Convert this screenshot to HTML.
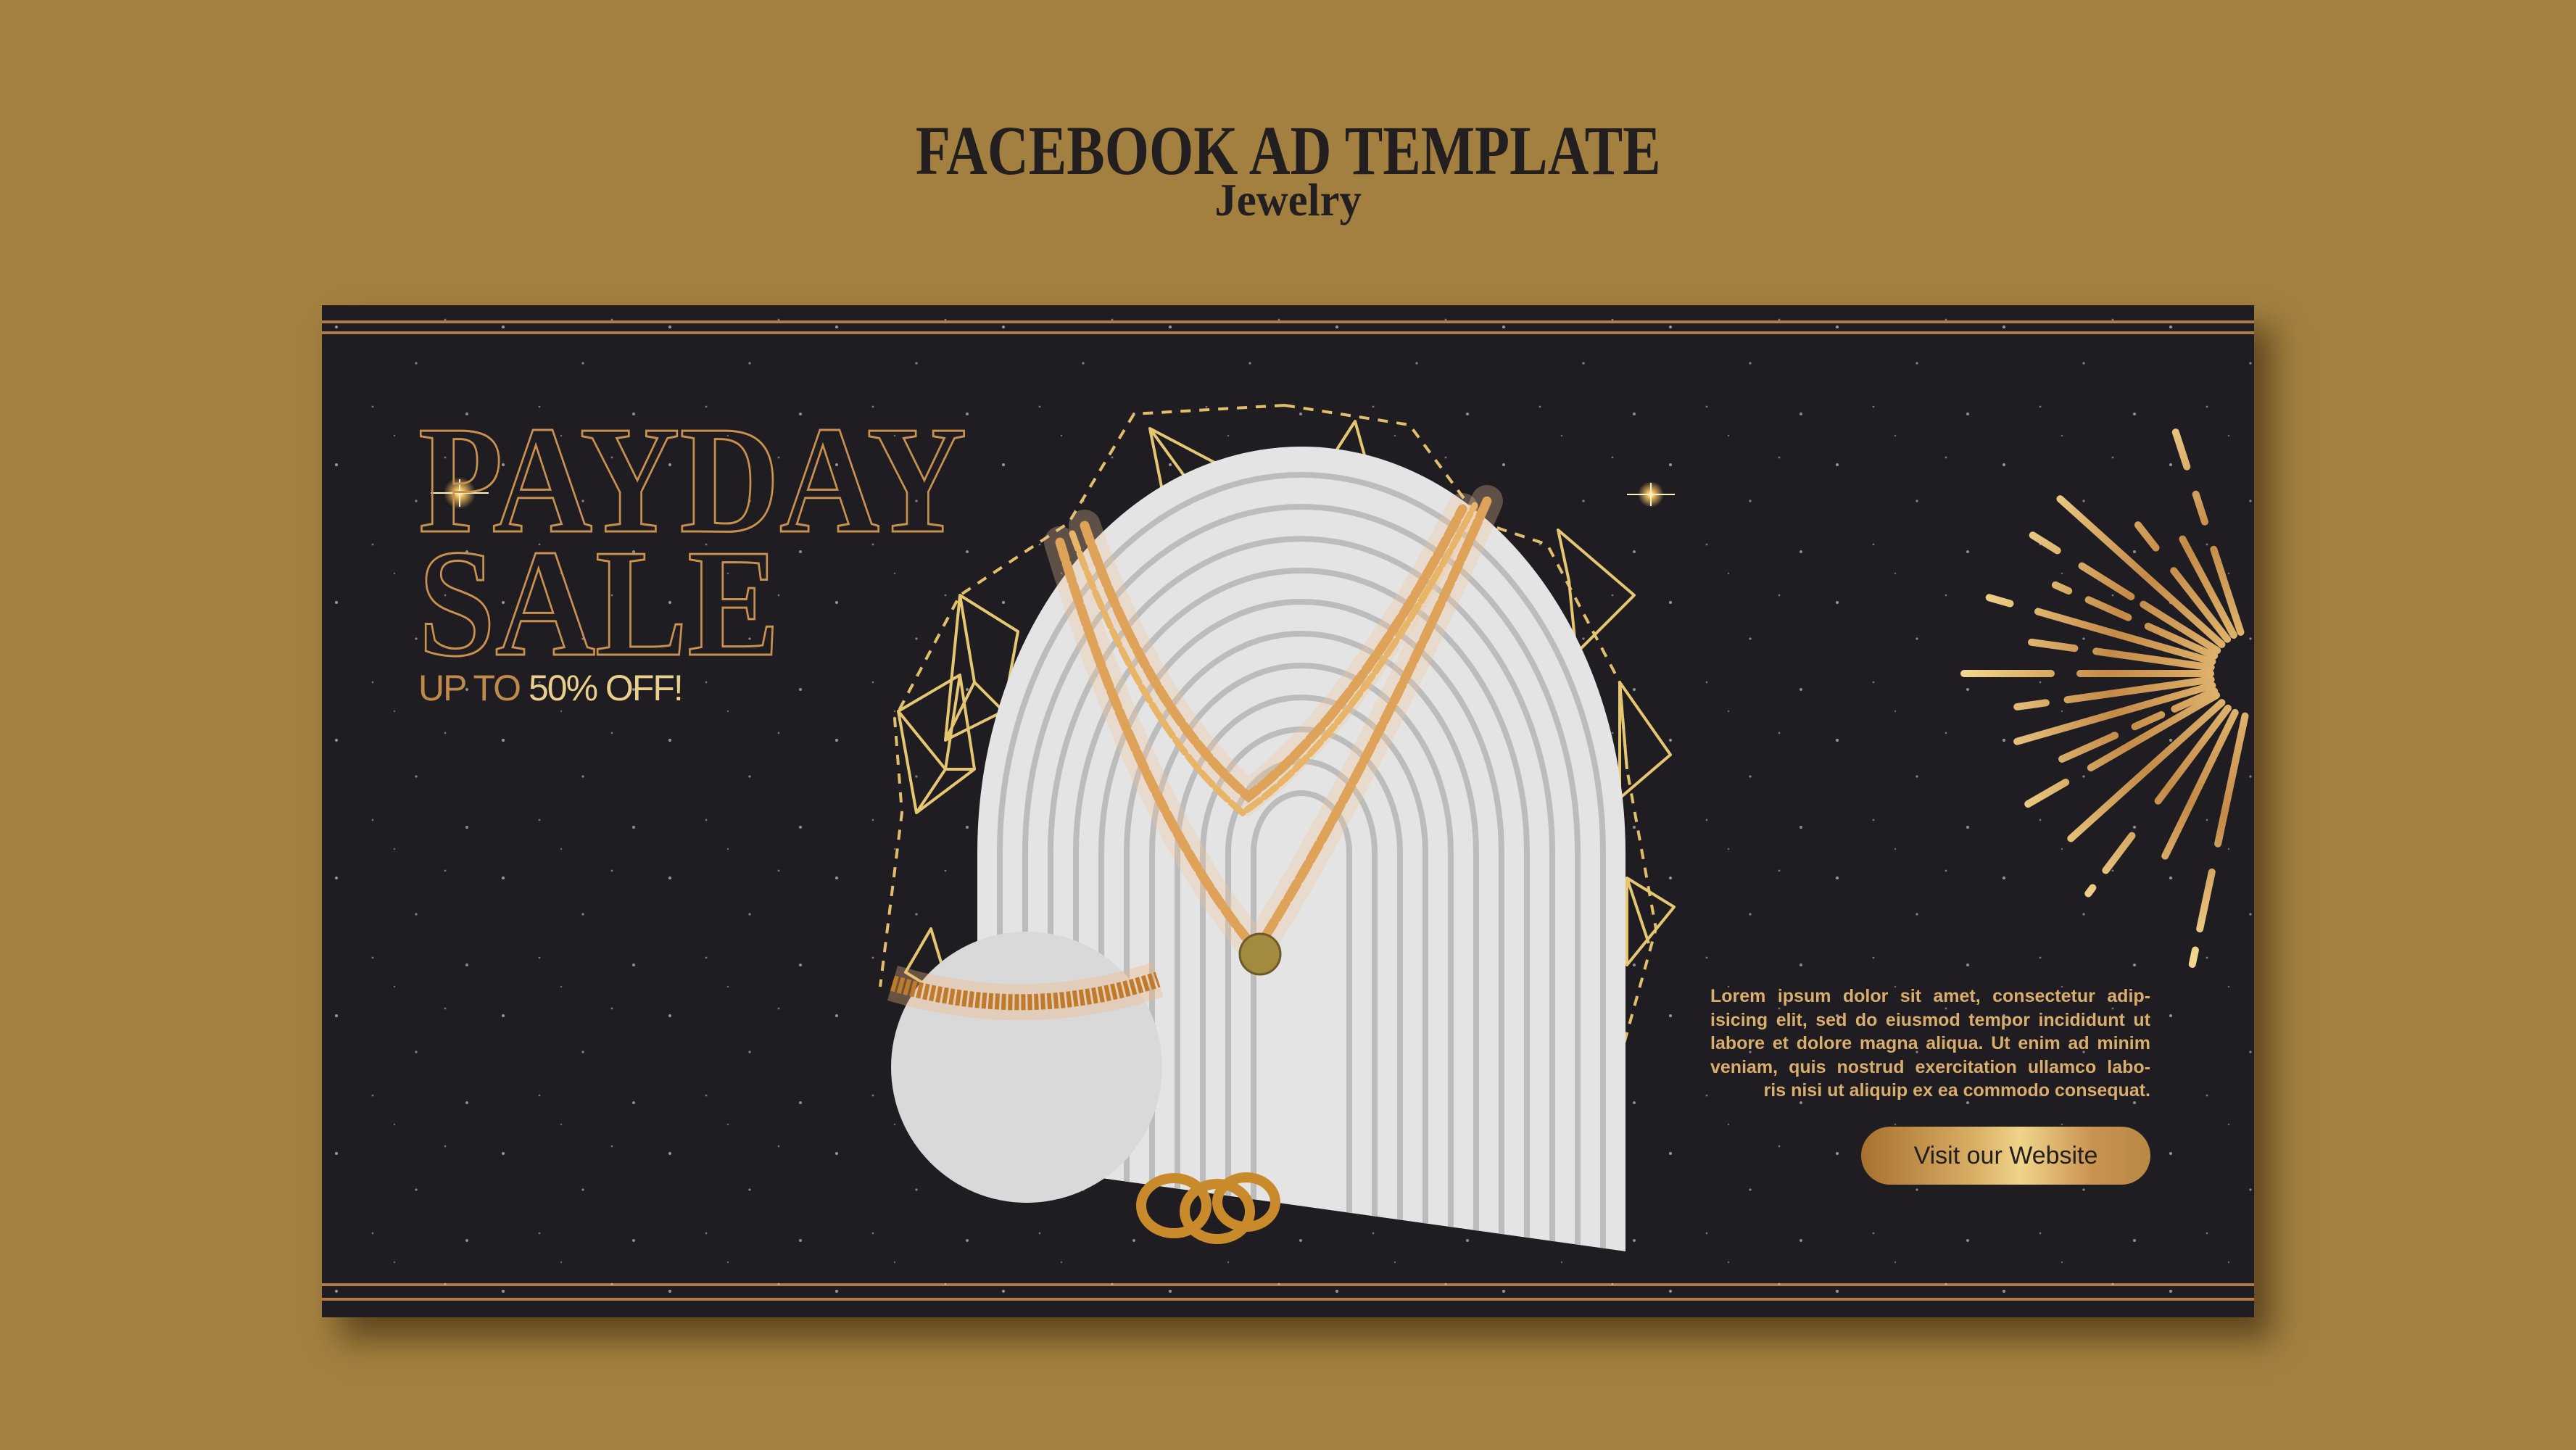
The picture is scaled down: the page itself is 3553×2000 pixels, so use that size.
<!DOCTYPE html>
<html><head><meta charset="utf-8"><style>
html,body{margin:0;padding:0}
body{width:3553px;height:2000px;background:#a3803f;position:relative;overflow:hidden;font-family:"Liberation Sans",sans-serif}
.t1{position:absolute;left:0;width:3553px;top:160px;text-align:center;font-family:"Liberation Serif",serif;font-weight:bold;font-size:96px;color:#231f20;line-height:1}
.t1 span{display:inline-block;transform:scaleX(0.82)}
.t2{position:absolute;left:0;width:3553px;top:244px;text-align:center;font-family:"Liberation Serif",serif;font-weight:bold;font-size:64px;color:#231f20;line-height:1}
.t2 span{display:inline-block;transform:scaleX(0.95)}
.banner{position:absolute;left:444px;top:421px;width:2665px;height:1396px;background:#1f1d21;box-shadow:25px 30px 40px rgba(40,25,5,.55);overflow:hidden}
.line{position:absolute;left:0;width:100%;height:4px;background:#b27c48}
.big{position:absolute;font-family:"Liberation Serif",serif;font-weight:bold;color:transparent;-webkit-text-stroke:3px #c9914f;line-height:1;transform-origin:0 0;white-space:nowrap}
.off{position:absolute;left:133px;top:503px;font-size:50px;color:#c08a4a;letter-spacing:-2px;line-height:1}
.off b{font-weight:normal;color:#e9cf8c}
.lorem{position:absolute;left:1915px;top:937px;width:607px;font-size:25px;font-weight:bold;line-height:32.5px;color:#d9ad6c}
.lorem div{text-align:justify;text-align-last:justify;white-space:nowrap}
.lorem div.l{text-align-last:right}
.btn{position:absolute;left:2123px;top:1133px;width:399px;height:80px;border-radius:40px;background:linear-gradient(90deg,#a8702f,#d9b066 40%,#f0d48a 55%,#c99350 80%,#b88845);color:#231f20;font-size:34px;text-align:center;line-height:80px}
</style></head><body>
<div class="t1"><span>FACEBOOK AD TEMPLATE</span></div>
<div class="t2"><span>Jewelry</span></div>
<div class="banner">
<div class="line" style="top:21px"></div>
<div class="line" style="top:36px"></div>
<div class="line" style="top:1349px"></div>
<div class="line" style="top:1369px"></div>
<svg width="2665" height="1396" style="position:absolute;left:0;top:0">
<defs>
<linearGradient id="g" gradientUnits="userSpaceOnUse" x1="-400" y1="0" x2="0" y2="0"><stop offset="0" stop-color="#f2d68f"/><stop offset=".5" stop-color="#c48a48"/><stop offset="1" stop-color="#e8c27a"/></linearGradient>
<radialGradient id="sp"><stop offset="0" stop-color="#fff"/><stop offset=".25" stop-color="#f5c060"/><stop offset="1" stop-color="#f5c060" stop-opacity="0"/></radialGradient>
<pattern id="stars" width="230" height="190" patternUnits="userSpaceOnUse">
<circle cx="20" cy="30" r="2" fill="#fff" opacity=".55"/><circle cx="130" cy="80" r="1.6" fill="#fff" opacity=".45"/><circle cx="200" cy="150" r="2" fill="#fff" opacity=".5"/><circle cx="70" cy="140" r="1.4" fill="#fff" opacity=".4"/><circle cx="170" cy="20" r="1.4" fill="#fff" opacity=".4"/><circle cx="100" cy="180" r="1.2" fill="#fff" opacity=".35"/>
</pattern>
<clipPath id="archc"><path d="M904 1180 L904 755 A447 560 0 0 1 1798 755 L1798 1305 Z"/></clipPath>
</defs>
<rect width="2665" height="1396" fill="url(#stars)"/>
<path d="M1328 138 L1500 165 L1600 300 L1690 330 L1790 520 L1800 640 L1840 860 L1790 1040 L1620 1230 M1328 138 L1120 150 L1030 300 L880 400 L790 570 L800 700 L770 940" fill="none" stroke="#e0bf6c" stroke-width="4" stroke-dasharray="14 12"/>
<g fill="none" stroke="#e5c772" stroke-width="4" stroke-linejoin="round">
<path d="M1142 170 L1275 240 L1170 310 Z M1142 170 L1200 250 L1170 310 M1142 170 L1275 240"/>
<path d="M1425 160 L1380 230 L1450 250 Z M1425 160 L1450 250"/>
<path d="M880 400 L960 450 L940 560 L860 600 Z M880 400 L900 520 L940 560 M900 520 L860 600"/>
<path d="M795 560 L880 510 L900 640 L820 700 Z M795 560 L860 640 L900 640 M860 640 L820 700 M880 510 L860 640"/>
<path d="M1705 310 L1810 400 L1730 480 L1720 380 Z M1705 310 L1720 380"/>
<path d="M1790 520 L1860 620 L1790 680 Z M1790 520 L1800 640"/>
<path d="M1800 790 L1865 830 L1800 910 Z M1800 790 L1830 880"/>
<path d="M805 920 L840 860 L870 960 Z"/>
</g>
<path d="M904 1180 L904 755 A447 560 0 0 1 1798 755 L1798 1305 Z" fill="#e4e4e4"/>
<g clip-path="url(#archc)" fill="none" stroke="#bcbcbc" stroke-width="8">
<path d="M935 1400 V755 A416 521 0 0 1 1767 755 V1400"/>
<path d="M970 1400 V755 A381 477 0 0 1 1732 755 V1400"/>
<path d="M1005 1400 V755 A346 433 0 0 1 1697 755 V1400"/>
<path d="M1040 1400 V755 A311 389 0 0 1 1662 755 V1400"/>
<path d="M1075 1400 V755 A276 346 0 0 1 1627 755 V1400"/>
<path d="M1110 1400 V755 A241 302 0 0 1 1592 755 V1400"/>
<path d="M1145 1400 V755 A206 258 0 0 1 1557 755 V1400"/>
<path d="M1180 1400 V755 A171 214 0 0 1 1522 755 V1400"/>
<path d="M1215 1400 V755 A136 170 0 0 1 1487 755 V1400"/>
<path d="M1250 1400 V755 A101 126 0 0 1 1452 755 V1400"/>
<path d="M1285 1400 V755 A66 82 0 0 1 1417 755 V1400"/>
</g>
<g fill="none" stroke-linecap="round">
<path d="M1052 304 Q1140 560 1278 678 Q1430 560 1573 281" stroke="#f3c89a" stroke-width="44" opacity=".3"/>
<path d="M1018 327 Q1130 700 1289 890 Q1440 650 1607 270" stroke="#f3c89a" stroke-width="44" opacity=".3"/>
<path d="M1052 304 Q1140 560 1278 678 Q1430 560 1573 281" stroke="#dea258" stroke-width="13" stroke-dasharray="24 7"/>
<path d="M1035 315 Q1135 590 1270 700 Q1420 600 1590 276" stroke="#e8b468" stroke-width="9" stroke-dasharray="22 7"/>
<path d="M1018 327 Q1130 700 1289 890 Q1440 650 1607 270" stroke="#dea258" stroke-width="13" stroke-dasharray="24 7"/>
</g>
<circle cx="1294" cy="895" r="28" fill="#a28a3e" stroke="#6b5a2a" stroke-width="3"/>
<circle cx="972" cy="1051" r="187" fill="#d9d9d9"/>
<path d="M787 935 Q972 990 1153 930" fill="none" stroke="#f0b880" stroke-width="50" opacity=".35"/>
<path d="M787 935 Q972 990 1153 930" fill="none" stroke="#c07a2a" stroke-width="22" stroke-dasharray="6 3"/>
<g fill="none" stroke="#c88a2a" stroke-width="14">
<ellipse cx="1175" cy="1242" rx="45" ry="38"/><ellipse cx="1235" cy="1250" rx="45" ry="38"/><ellipse cx="1275" cy="1237" rx="40" ry="34"/>
</g>
<circle cx="190" cy="259" r="22" fill="url(#sp)"/>
<path d="M150 259 L230 259 M190 240 L190 278" stroke="#fff2c0" stroke-width="2"/>
<circle cx="1833" cy="261" r="18" fill="url(#sp)"/>
<path d="M1800 261 L1866 261 M1833 245 L1833 277" stroke="#fff2c0" stroke-width="2"/>
<g transform="translate(2665,508)" stroke="url(#g)" stroke-width="10" stroke-linecap="round" fill="none">
<line x1="-60" y1="0" x2="-400" y2="0" stroke-dasharray="180 40 120 40 60"/>
<line x1="-60" y1="0" x2="-320" y2="0" transform="rotate(8)" stroke-dasharray="160 30 60"/>
<line x1="-60" y1="0" x2="-380" y2="0" transform="rotate(16)" stroke-dasharray="250 40 60 40 60"/>
<line x1="-60" y1="0" x2="-300" y2="0" transform="rotate(24)" stroke-dasharray="100 30 60 30 60"/>
<line x1="-60" y1="0" x2="-360" y2="0" transform="rotate(32)" stroke-dasharray="120 20 80 40 60"/>
<line x1="-60" y1="0" x2="-360" y2="0" transform="rotate(42)" stroke-dasharray="300"/>
<line x1="-60" y1="0" x2="-300" y2="0" transform="rotate(52)" stroke-dasharray="120 40 40"/>
<line x1="-60" y1="0" x2="-280" y2="0" transform="rotate(62)" stroke-dasharray="150"/>
<line x1="-60" y1="0" x2="-350" y2="0" transform="rotate(72)" stroke-dasharray="120 40 40 40 60"/>
<line x1="-60" y1="0" x2="-330" y2="0" transform="rotate(-8)" stroke-dasharray="200 30 60"/>
<line x1="-60" y1="0" x2="-340" y2="0" transform="rotate(-16)" stroke-dasharray="280"/>
<line x1="-60" y1="0" x2="-320" y2="0" transform="rotate(-24)" stroke-dasharray="60 20 40 30 80"/>
<line x1="-60" y1="0" x2="-380" y2="0" transform="rotate(-30)" stroke-dasharray="200 40 60 30 60"/>
<line x1="-60" y1="0" x2="-340" y2="0" transform="rotate(-42)" stroke-dasharray="300"/>
<line x1="-60" y1="0" x2="-380" y2="0" transform="rotate(-53)" stroke-dasharray="160 60 60 30 60"/>
<line x1="-60" y1="0" x2="-280" y2="0" transform="rotate(-64)" stroke-dasharray="220"/>
<line x1="-60" y1="0" x2="-410" y2="0" transform="rotate(-78)" stroke-dasharray="180 40 80 30 60"/>
</g>
</svg>
<div class="big" style="left:133px;top:135px;font-size:212px;transform:scaleX(0.9)">PAYDAY</div>
<div class="big" style="left:133px;top:305px;font-size:212px;transform:scaleX(0.9)">SALE</div>
<div class="off">UP TO <b>50% OFF!</b></div>
<div class="lorem">
<div>Lorem ipsum dolor sit amet, consectetur adip-</div>
<div>isicing elit, sed do eiusmod tempor incididunt ut</div>
<div>labore et dolore magna aliqua. Ut enim ad minim</div>
<div>veniam, quis nostrud exercitation ullamco labo-</div>
<div class="l">ris nisi ut aliquip ex ea commodo consequat.</div>
</div>
<div class="btn">Visit our Website</div>
</div>
</body></html>
